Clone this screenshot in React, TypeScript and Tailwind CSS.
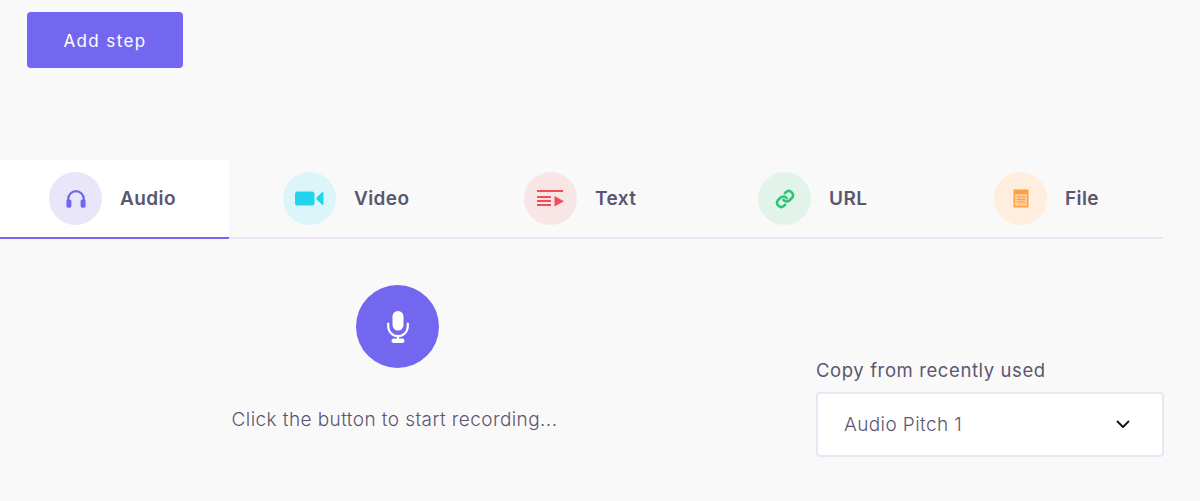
import React from "react";

function Headphones() {
  return (
    <svg width="20" height="18" viewBox="0 0 20 18" fill="none">
      <path d="M2.2 11V9a7.8 7.8 0 0 1 15.6 0v2" stroke="#7367F0" strokeWidth="2.2" />
      <rect x="0.4" y="9.4" width="5" height="8.4" rx="1.7" fill="#7367F0" />
      <rect x="14.6" y="9.4" width="5" height="8.4" rx="1.7" fill="#7367F0" />
    </svg>
  );
}
function VideoIcon() {
  return (
    <svg width="29" height="15" viewBox="0 0 29 15" fill="#22D3EE">
      <rect x="0" y="0.5" width="19.5" height="14" rx="2.5" />
      <path d="M21.5 6.5 27.2 1.2c.5-.4 1.3-.1 1.3.6v11.4c0 .7-.8 1-1.3.6l-5.7-5.3v-2.5Z" />
    </svg>
  );
}
function TextIcon() {
  return (
    <svg width="27" height="17" viewBox="0 0 27 17" fill="#EF4E55">
      <rect x="0" y="0" width="26" height="2" />
      <rect x="0" y="6" width="14" height="2" />
      <rect x="0" y="10" width="14" height="2" />
      <rect x="0" y="14" width="14" height="2" />
      <path d="M17.5 6 27 11.2 17.5 16.5Z" />
    </svg>
  );
}
function LinkIcon() {
  return (
    <svg width="20" height="20" viewBox="0 0 24 24" fill="none" stroke="#2BC573" strokeWidth="3" strokeLinecap="round" strokeLinejoin="round">
      <path d="M10 13a5 5 0 0 0 7.5.5l3-3a5 5 0 0 0-7-7l-1.7 1.7" />
      <path d="M14 11a5 5 0 0 0-7.5-.5l-3 3a5 5 0 0 0 7 7l1.7-1.7" />
    </svg>
  );
}
function FileIcon() {
  return (
    <svg width="16" height="19" viewBox="0 0 16 19">
      <rect x="0.5" y="0.5" width="15" height="18" fill="#FF9F43" />
      <rect x="2" y="5" width="12" height="12" fill="#FFC993" />
      <rect x="4" y="7.5" width="8" height="1" fill="#FF9F43" />
      <rect x="4" y="10" width="8" height="1" fill="#FF9F43" />
      <rect x="4" y="12.5" width="8" height="1" fill="#FF9F43" />
    </svg>
  );
}
function MicIcon() {
  return (
    <svg width="22" height="32" viewBox="0 0 22 32" fill="none">
      <rect x="5.5" y="0" width="11" height="19.5" rx="5.5" fill="#fff" />
      <path d="M1.2 12.5v2.8a9.8 9.8 0 0 0 19.6 0v-2.8" stroke="#fff" strokeWidth="2.2" strokeLinecap="round" />
      <rect x="10" y="25" width="2" height="4" fill="#fff" />
      <rect x="4.5" y="27.6" width="13" height="4.4" rx="2.2" fill="#fff" />
    </svg>
  );
}

function Tab({ width, pad, bg, icon, label, active }: { width: string; pad: string; bg: string; icon: React.ReactNode; label: string; active?: boolean }) {
  return (
    <div className={`${width} ${pad} h-[79px] flex items-center gap-[18px] ${active ? "bg-white border-b-2 border-[#7367F0] rounded-t-[3px]" : "border-b-2 border-transparent"}`}>
      <div className={`w-[53px] h-[53px] rounded-full flex items-center justify-center ${bg}`}>{icon}</div>
      <span className="pt-[2px] text-[19px] font-semibold text-[#5A5670] tracking-[0.4px]">{label}</span>
    </div>
  );
}

export default function App() {
  return (
    <div className="w-[1200px] h-[501px] overflow-hidden bg-[#FAF9FA] font-['Inter','Open_Sans',sans-serif]">
      <div className="pt-3 pl-[27px]">
        <button className="w-[156px] h-[56px] pt-[3px] rounded-[4px] bg-[#7367F0] text-white text-[17px] tracking-[1.4px] flex items-center justify-center">
          Add step
        </button>
      </div>
      <div className="mt-[92px] w-[1163px] flex border-b-2 border-[#E8E6F3] h-[79px]">
        <Tab width="w-[229px] shrink-0" pad="pl-[49px]" bg="bg-[#E8E6F8]" icon={<Headphones />} label="Audio" active />
        <Tab width="w-[236px] shrink-0" pad="pl-[54px]" bg="bg-[#DCF5F8]" icon={<VideoIcon />} label="Video" />
        <Tab width="w-[234px] shrink-0" pad="pl-[59px]" bg="bg-[#F8E6E6]" icon={<TextIcon />} label="Text" />
        <Tab width="w-[236px] shrink-0" pad="pl-[59px]" bg="bg-[#E2F4EA]" icon={<LinkIcon />} label="URL" />
        <Tab width="w-[228px] shrink-0" pad="pl-[59px]" bg="bg-[#FFEDDD]" icon={<FileIcon />} label="File" />
      </div>
      <div className="flex">
        <div className="w-[792px] flex flex-col items-center pt-[46px]">
          <button className="w-[83px] h-[83px] rounded-full bg-[#7367F0] flex items-center justify-center ml-[3px]">
            <MicIcon />
          </button>
          <p className="mt-[40px] text-[19px] leading-[24px] font-light text-[#5A5670] -ml-[3px] tracking-[0.42px]">Click the button to start recording...</p>
        </div>
        <div className="ml-6 w-[348px] pt-[119px]">
          <p className="text-[18.5px] leading-[24px] text-[#5A5670] tracking-[0.6px]">Copy from recently used</p>
          <div className="mt-[10px] h-[65px] bg-white border-2 border-[#E9E7F5] rounded-[4px] pl-[26px] pr-[32px] flex items-center justify-between">
            <span className="pt-px text-[19px] font-light text-[#5A5670] tracking-[0.4px]">Audio Pitch 1</span>
            <svg width="14" height="9" viewBox="0 0 14 9" fill="none" stroke="#111" strokeWidth="1.8" strokeLinecap="round" strokeLinejoin="round">
              <path d="M1.5 1.5 7 7l5.5-5.5" />
            </svg>
          </div>
        </div>
      </div>
    </div>
  );
}
